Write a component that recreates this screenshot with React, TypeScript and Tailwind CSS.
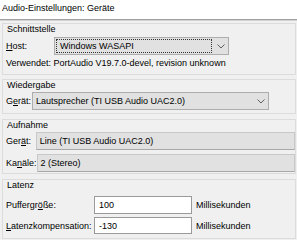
import React from "react";

const Chevron = () => (
  <svg width="8" height="5" viewBox="0 0 8 5" className="block">
    <path d="M0.5 0.5 L4 4 L7.5 0.5" fill="none" stroke="#606060" strokeWidth="1" />
  </svg>
);

function Combo({ text, arrow = true, focused = false, className = "" }: { text: string; arrow?: boolean; focused?: boolean; className?: string }) {
  return (
    <div className={`flex h-[18px] items-stretch border border-[#adadad] bg-[#e1e1e1] ${className}`}>
      <div className={`flex flex-1 items-center pl-[3px] ${focused ? "m-[1px] border border-dotted border-[#333]" : ""}`}>
        <span className="whitespace-nowrap">{text}</span>
      </div>
      {arrow && (
        <div className="flex w-[15px] items-center justify-center">
          <Chevron />
        </div>
      )}
    </div>
  );
}

function Group({ title, children, className = "" }: { title: string; children: React.ReactNode; className?: string }) {
  return (
    <div className={`ml-[2px] w-[294px] border border-[#dcdcdc] pl-[3px] ${className}`}>
      <div className="h-[11px] pl-[1px] leading-[11px]">{title}</div>
      {children}
    </div>
  );
}

export default function App() {
  return (
    <div
      className="h-[240px] w-[297px] overflow-hidden bg-[#f0f0f0] text-[9px] leading-[12px] text-black"
      style={{ fontFamily: '"Liberation Sans", Arial, sans-serif' }}
    >
      <div className="flex h-[20px] items-center border-b border-[#a0a0a0] bg-white pl-[2px] pb-[3px]">
        Audio-Einstellungen: Geräte
      </div>
      <div className="h-[1px] bg-[#d4d4d4]" />
      <div className="h-[2px]" />

      <Group title="Schnittstelle" className="pb-[5px]">
        <div className="mt-[2px] flex h-[18px] items-center">
          <span className="w-[48px]">
            <span className="underline">H</span>ost:
          </span>
          <Combo text="Windows WASAPI" focused className="w-[175px]" />
        </div>
        <div className="mt-[2px] flex h-[12px] items-center whitespace-nowrap">
          Verwendet: PortAudio V19.7.0-devel, revision unknown
        </div>
      </Group>

      <Group title="Wiedergabe" className="mt-[4px] pb-[3px]">
        <div className="mt-[1px] flex h-[18px] items-center">
          <span className="w-[26px]">
            G<span className="underline">e</span>rät:
          </span>
          <Combo text="Lautsprecher (TI USB Audio UAC2.0)" className="w-[237px]" />
        </div>
      </Group>

      <Group title="Aufnahme" className="mt-[5px] pb-[2px]">
        <div className="mt-[1px] flex h-[18px] items-center">
          <span className="w-[31px]">
            Ger<span className="underline">ä</span>t:
          </span>
          <Combo text="Line (TI USB Audio UAC2.0)" arrow={false} className="w-[270px] border-[#c8c8c8] border-b-[#a8a8a8]" />
        </div>
        <div className="mt-[4px] flex h-[17px] items-center">
          <span className="w-[31px]">
            Ka<span className="underline">n</span>äle:
          </span>
          <Combo text="2 (Stereo)" arrow={false} className="h-[17px] w-[270px] border-[#c8c8c8] border-b-[#a8a8a8]" />
        </div>
      </Group>

      <Group title="Latenz" className="mt-[5px] pb-[4px]">
        <div className="mt-[5px] flex h-[18px] items-center">
          <span className="w-[88px] whitespace-nowrap">
            Puffergr<span className="underline">ö</span>ße:
          </span>
          <div className="flex h-[18px] w-[98px] items-center border border-[#9a9a9a] bg-white pl-[4px]">100</div>
          <span className="ml-[4px]">Millisekunden</span>
        </div>
        <div className="mt-[3px] flex h-[17px] items-center">
          <span className="w-[88px] whitespace-nowrap">
            <span className="underline">L</span>atenzkompensation:
          </span>
          <div className="flex h-[17px] w-[98px] items-center border border-[#9a9a9a] bg-white pl-[4px]">-130</div>
          <span className="ml-[4px]">Millisekunden</span>
        </div>
      </Group>
    </div>
  );
}
